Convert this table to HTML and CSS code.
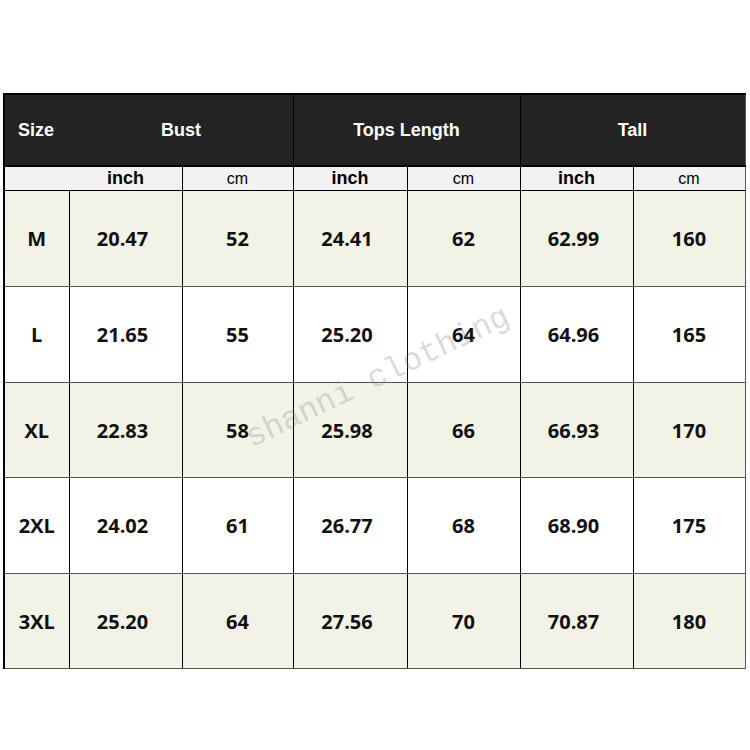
FILE: index.html
```html
<!DOCTYPE html>
<html>
<head>
<meta charset="utf-8">
<link rel="stylesheet" href="styles.css">
</head>
<body>
<div class="wrap">
<table class="chart">
<colgroup>
<col class="c-size"><col class="c-113"><col class="c-111"><col class="c-114"><col class="c-113"><col class="c-113"><col class="c-112">
</colgroup>
<thead>
<tr class="head">
<th class="h-size">Size</th>
<th colspan="2" class="h-first">Bust</th>
<th colspan="2" class="h-grp">Tops Length</th>
<th colspan="2" class="h-grp">Tall</th>
</tr>
<tr class="sub">
<th class="s-blank"></th>
<th class="s-in s-first">inch</th>
<th class="s-cm">cm</th>
<th class="s-in">inch</th>
<th class="s-cm">cm</th>
<th class="s-in">inch</th>
<th class="s-cm">cm</th>
</tr>
</thead>
<tbody>
<tr class="odd tall"><td>M</td><td>20.47</td><td>52</td><td>24.41</td><td>62</td><td>62.99</td><td>160</td></tr>
<tr class="even tall"><td>L</td><td>21.65</td><td>55</td><td>25.20</td><td>64</td><td>64.96</td><td>165</td></tr>
<tr class="odd short"><td>XL</td><td>22.83</td><td>58</td><td>25.98</td><td>66</td><td>66.93</td><td>170</td></tr>
<tr class="even tall"><td>2XL</td><td>24.02</td><td>61</td><td>26.77</td><td>68</td><td>68.90</td><td>175</td></tr>
<tr class="odd short"><td>3XL</td><td>25.20</td><td>64</td><td>27.56</td><td>70</td><td>70.87</td><td>180</td></tr>
</tbody>
</table>
<div class="watermark">shanni clothing</div>
</div>
</body>
</html>
```
FILE: styles.css
```css
html, body {
  margin: 0;
  padding: 0;
  background: #ffffff;
}
.wrap {
  position: relative;
  width: 750px;
  height: 750px;
  padding-top: 93px;
  box-sizing: border-box;
}
.chart {
  margin-left: 3px;
  width: 742px;
  border-collapse: collapse;
  table-layout: fixed;
  border-top: 2px solid #000;
  border-left: 2px solid #000;
  border-right: 1px solid #555;
  border-bottom: 1px solid #444;
}
.c-size { width: 65px; }
.c-113 { width: 113px; }
.c-111 { width: 111px; }
.c-114 { width: 114px; }
.c-112 { width: 112px; }
.head th {
  background: #232323;
  color: #ffffff;
  font-family: "Liberation Sans", Arial, sans-serif;
  font-weight: 700;
  font-size: 18px;
  height: 70px;
  padding: 0;
  text-align: center;
  border-bottom: 2px solid #000;
}
.head .h-grp {
  border-left: 1px solid #000;
}
.head .h-first {
  border-left: 1px solid #232323;
}
.head .h-size {
  text-align: left;
  padding-left: 13px;
}
.sub th {
  background: #f2f2f2;
  color: #000;
  font-family: "Liberation Sans", Arial, sans-serif;
  height: 23px;
  padding: 0;
  text-align: center;
  border-bottom: 1px solid #000;
}
.sub .s-in {
  font-weight: 700;
  font-size: 18px;
  border-left: 1px solid #000;
}
.sub .s-first {
  border-left: 1px solid #f2f2f2;
}
.sub .s-cm {
  font-weight: 400;
  font-size: 16px;
  border-left: 1px solid #000;
}
tbody td {
  font-family: "Open Sans", "Noto Sans", sans-serif;
  font-weight: 700;
  font-size: 20px;
  color: #111;
  text-align: center;
  padding: 0;
  border-left: 1px solid #000;
  border-bottom: 1px solid #555;
}
tbody td:nth-child(2),
tbody td:nth-child(4),
tbody td:nth-child(6) {
  padding-right: 6px;
}
.tall td { height: 95px; }
.short td { height: 94px; }
tbody td:first-child {
  border-left: none;
}
.odd td { background: #f2f3e6; }
.even td { background: #ffffff; }
.watermark {
  position: absolute;
  left: 234px;
  top: 360px;
  font-family: "Liberation Mono", "Courier New", monospace;
  font-size: 32px;
  line-height: 36px;
  color: rgba(130, 130, 130, 0.3);
  transform: rotate(-25.6deg);
  transform-origin: center center;
  white-space: nowrap;
  pointer-events: none;
}
```
